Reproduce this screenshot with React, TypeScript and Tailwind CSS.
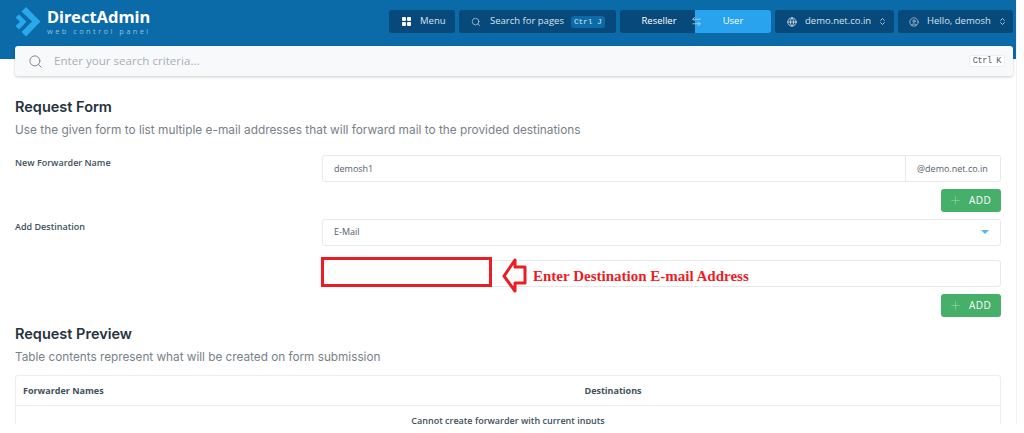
import { Search, Plus, ChevronsUpDown, Globe, CircleUser, ArrowLeftRight } from "lucide-react";

const Logo = () => (
  <svg width="26" height="30" viewBox="0 0 26 30" className="shrink-0">
    <path d="M11 0 L25.5 14.5 L11 29.5 L6.5 25 L17 14.5 L6.5 4.5 Z" fill="#29a9ec" />
    <path d="M0.5 10.5 L4 7.5 L11.5 14.8 L4 22.5 L0.5 19 L5 14.8 Z" fill="#29a9ec" />
  </svg>
);

const Dots = () => (
  <svg width="9" height="9" viewBox="0 0 10 10" className="shrink-0">
    <rect x="0" y="0" width="4.4" height="4.4" rx="1" fill="#fff" />
    <rect x="5.6" y="0" width="4.4" height="4.4" rx="1" fill="#fff" />
    <rect x="0" y="5.6" width="4.4" height="4.4" rx="1" fill="#fff" />
    <rect x="5.6" y="5.6" width="4.4" height="4.4" rx="1" fill="#fff" />
  </svg>
);

const navBtn = "h-[23px] rounded-[3px] bg-[#07497a] flex items-center text-[9.5px] text-[#d5e4ef]";

function AddButton() {
  return (
    <div className="flex justify-end">
      <div className="w-[60px] h-[23px] rounded-[3px] bg-[#46af6a] flex items-center pl-[8px] gap-[7px] text-[10px] tracking-[0.4px] font-medium text-white">
        <Plus size={13} strokeWidth={1} className="text-[#a8dcb9]" />
        <span>ADD</span>
      </div>
    </div>
  );
}

export default function App() {
  return (
    <div className="w-[1024px] h-[433px] overflow-hidden bg-white font-['Open_Sans',sans-serif] text-[#40505d]">
      <div className="w-[1017px] h-[424px] overflow-hidden border-r border-[#f1f2f4] relative">
        <header className="h-[59px] bg-[#0b6aa8] flex items-start justify-between pl-[15px] pr-[3px] pt-[7px]">
          <div className="flex items-start gap-[6px] h-[30px]">
            <Logo />
            <div className="flex flex-col leading-none">
              <span className="h-[19px] text-[16.5px] font-bold text-white font-['Noto_Sans',sans-serif] leading-[19px]">DirectAdmin</span>
              <span className="mt-[1px] text-[7.5px] tracking-[2.4px] text-[#8fc0e0] leading-[9px]">web control panel</span>
            </div>
          </div>
          <div className="flex gap-[4px] pt-[3px]">
            <div className={`${navBtn} w-[66px] pl-[13px] gap-[9px]`}>
              <Dots />
              <span>Menu</span>
            </div>
            <div className={`${navBtn} w-[157px] pl-[12px]`}>
              <Search size={10} strokeWidth={1.5} />
              <span className="ml-[9px]">Search for pages</span>
              <span className="ml-[7px] h-[12px] px-[3px] rounded-[3px] bg-[#0b6aa8] flex items-center font-['Liberation_Mono',monospace] text-[8px] tracking-[-0.2px]">Ctrl J</span>
            </div>
            <div className="h-[23px] w-[151px] flex rounded-[3px] overflow-hidden text-[9.5px] text-white relative font-medium">
              <div className="w-[75px] bg-[#07497a] flex items-center justify-center pl-[3px]">Reseller</div>
              <div className="flex-1 bg-[#2aa3ee] flex items-center justify-center">User</div>
              <ArrowLeftRight size={11} strokeWidth={1.5} className="absolute left-[71px] top-[6px] text-[#cfe6f5]" />
            </div>
            <div className={`${navBtn} w-[119px] pl-[12px]`}>
              <Globe size={10} strokeWidth={2} />
              <span className="ml-[8px]">demo.net.co.in</span>
              <ChevronsUpDown size={9} className="ml-auto mr-[7px]" />
            </div>
            <div className={`${navBtn} w-[115px] pl-[11px]`}>
              <CircleUser size={10} strokeWidth={1.5} />
              <span className="ml-[8px]">Hello, demosh</span>
              <ChevronsUpDown size={9} className="ml-auto mr-[6px]" />
            </div>
          </div>
        </header>

        <div className="absolute left-[15px] top-[46px] w-[998px] h-[30px] rounded-[3px] bg-[#f8f9fb] shadow-[0_1px_3px_rgba(0,0,0,0.2)] flex items-center pl-[13px] pr-[8px]">
          <Search size={15} strokeWidth={1.4} className="text-[#6f7880]" />
          <span className="ml-[11px] text-[11.6px] text-[#a9afb5]">Enter your search criteria...</span>
          <span className="ml-auto h-[12px] px-[3px] rounded-[2px] border border-[#eceef0] bg-white flex items-center font-['Liberation_Mono',monospace] text-[8.5px] tracking-[-0.4px] text-[#55606a]">Ctrl K</span>
        </div>

        <main className="pl-[15px] pr-[15px] pt-[38px]">
          <h2 className="text-[14.5px] font-semibold font-['Inter',sans-serif] text-[#26323d] leading-[20px]">Request Form</h2>
          <p className="mt-[5px] text-[11.85px] font-['Inter',sans-serif] leading-[16px] text-[#77818a]">Use the given form to list multiple e-mail addresses that will forward mail to the provided destinations</p>

          <div className="mt-[17px] flex">
            <label className="w-[307px] shrink-0 text-[9px] font-semibold leading-[14px] pt-[1px]">New Forwarder Name</label>
            <div className="flex-1">
              <div className="h-[27px] flex border border-[#e7e9eb] rounded-[3px] text-[9px] text-[#55606a]">
                <div className="flex-1 flex items-center pl-[11px]">demosh1</div>
                <div className="w-[95px] border-l border-[#e7e9eb] flex items-center pl-[11px]">@demo.net.co.in</div>
              </div>
              <div className="mt-[7px]"><AddButton /></div>
            </div>
          </div>

          <div className="mt-[7px] flex">
            <label className="w-[307px] shrink-0 text-[9px] font-semibold leading-[14px] pt-[1px]">Add Destination</label>
            <div className="flex-1">
              <div className="h-[27px] flex items-center justify-between border border-[#e7e9eb] rounded-[3px] pl-[11px] pr-[11px] pb-[1px] text-[9px] text-[#55606a]">
                <span>E-Mail</span>
                <span className="w-0 h-0 border-l-[4px] border-r-[4px] border-t-[4px] border-l-transparent border-r-transparent border-t-[#5ab2f2]" />
              </div>
              <div className="relative mt-[14px] h-[27px] border border-[#e7e9eb] rounded-[3px]">
                <div className="absolute left-[-2px] top-[-4px] w-[171px] h-[30px] border-[3.5px] border-[#ed1c24] bg-white" />
                <svg className="absolute left-[178px] top-[-4px]" width="27" height="36" viewBox="0 0 27 36">
                  <path d="M3 19 L14 3 L14 10 L24 10 L24 26 L14 26 L14 34 Z" fill="#fff" stroke="#ed1c24" strokeWidth="3" strokeLinejoin="round" />
                </svg>
                <span className="absolute left-[210px] top-[7px] whitespace-nowrap font-['Liberation_Serif',serif] font-bold text-[15px] leading-[17px] text-[#ed1c24]">Enter Destination E-mail Address</span>
              </div>
              <div className="mt-[7px]"><AddButton /></div>
            </div>
          </div>

          <h2 className="mt-[7px] text-[14.5px] font-semibold font-['Inter',sans-serif] text-[#26323d] leading-[20px]">Request Preview</h2>
          <p className="mt-[5px] text-[11.75px] font-['Inter',sans-serif] leading-[16px] text-[#77818a]">Table contents represent what will be created on form submission</p>

          <div className="mt-[10px] border border-[#ecedef] rounded-t-[3px]">
            <div className="h-[30px] grid grid-cols-2 items-center border-b border-[#ecedef] pl-[7px] text-[9px] font-bold">
              <span>Forwarder Names</span>
              <span className="ml-[73px]">Destinations</span>
            </div>
            <div className="h-[40px] pt-[9px] text-center text-[9px] font-semibold leading-[12px]">Cannot create forwarder with current inputs</div>
          </div>
        </main>
      </div>
    </div>
  );
}
